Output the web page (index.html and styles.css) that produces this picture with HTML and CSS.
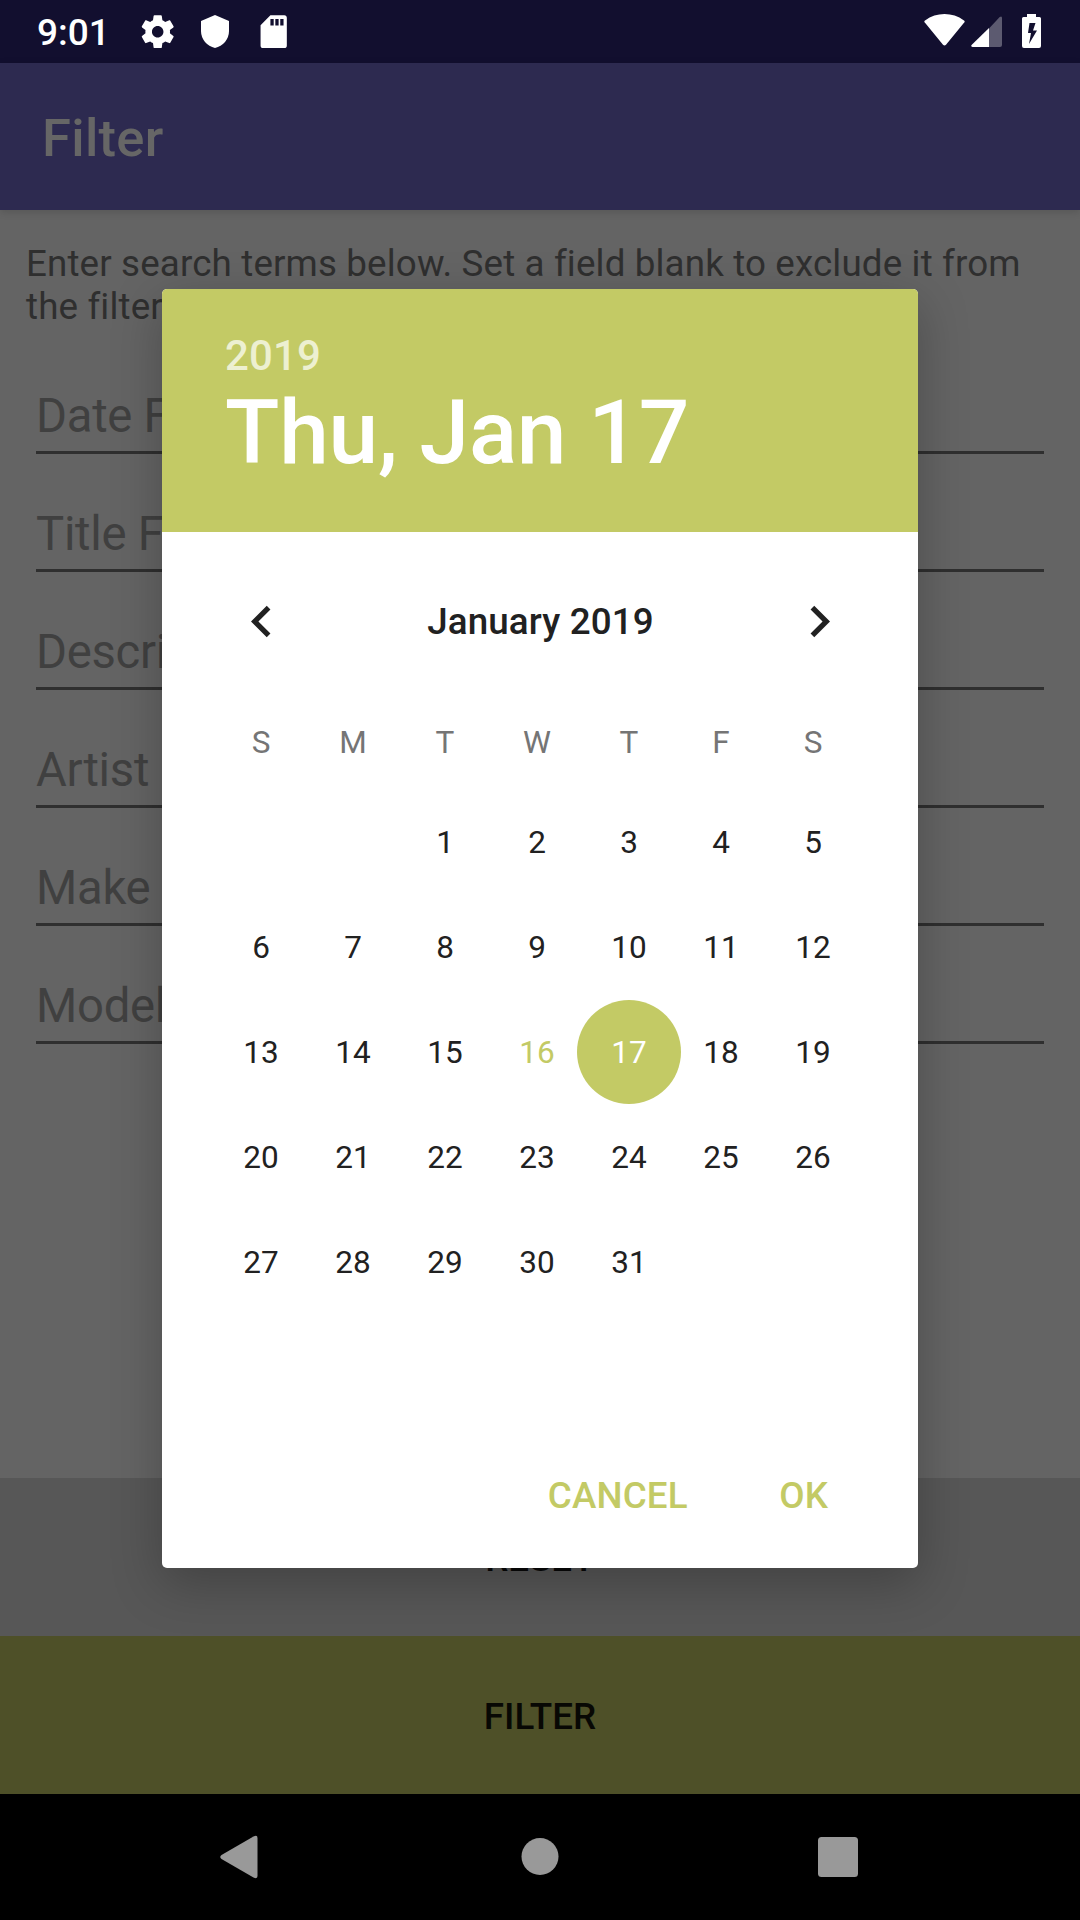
FILE: index.html
```html
<!DOCTYPE html>
<html lang="en">
<head>
<meta charset="utf-8">
<title>Filter</title>
<link rel="stylesheet" href="styles.css">
</head>
<body>
<div class="screen">
  <header class="status-bar">
    <span class="clock">9:01</span>
    <svg class="status-icon gear" viewBox="0 0 24 24"><path d="M19.43 12.98c.04-.32.07-.64.07-.98s-.03-.66-.07-.98l2.11-1.65c.19-.15.24-.42.12-.64l-2-3.46c-.12-.22-.39-.3-.61-.22l-2.49 1c-.52-.4-1.08-.73-1.69-.98l-.38-2.65C14.46 2.18 14.25 2 14 2h-4c-.25 0-.46.18-.49.42l-.38 2.65c-.61.25-1.17.59-1.69.98l-2.49-1c-.23-.09-.49 0-.61.22l-2 3.46c-.13.22-.07.49.12.64l2.11 1.65c-.04.32-.07.65-.07.98s.03.66.07.98l-2.11 1.65c-.19.15-.24.42-.12.64l2 3.46c.12.22.39.3.61.22l2.49-1c.52.4 1.08.73 1.69.98l.38 2.65c.03.24.24.42.49.42h4c.25 0 .46-.18.49-.42l.38-2.65c.61-.25 1.17-.59 1.69-.98l2.49 1c.23.09.49 0 .61-.22l2-3.46c.12-.22.07-.49-.12-.64l-2.11-1.65zM12 15.5c-1.93 0-3.5-1.57-3.5-3.5s1.57-3.5 3.5-3.5 3.500 1.570 3.500 3.500-1.570 3.500-3.500 3.500z"/></svg>
    <svg class="shield" viewBox="0 0 28 33"><path d="M14 0 28 6V16C28 24.500 22 31 14 33 6 31 0 24.500 0 16V6Z"/></svg>
    <svg class="status-icon sd" viewBox="0 0 24 24"><path d="M18 2h-8L4 8v12.500c0 .9.600 1.500 1.500 1.500h13c.9 0 1.500-.6 1.500-1.500v-17C20 2.600 19.400 2 18.500 2zm-6 6.300h-2V4.300h2zm3 0h-2V4.300h2zm3 0h-2V4.300h2z"/></svg>
    <svg class="wifi" viewBox="0 0 41 32"><path d="M1 8.800Q-.4 7.600 1 6.500C7 2 13.500 0 20.500 0S34 2 40 6.500Q41.400 7.600 40 8.800L22 30.800Q20.500 32.200 19 30.800Z"/></svg>
    <svg class="signal" viewBox="0 0 31 31"><path class="dim" d="M18 12.500 28.700 1Q31 -.6 31 2V29Q31 31 29 31H18Z"/><path d="M18 12V31H1.500Q-.8 30.500 .8 28.800Z"/></svg>
    <svg class="battery" viewBox="0 0 19 34"><path fill-rule="evenodd" d="M5 0H14V3H17.500Q19 3 19 4.500V32Q19 34 17 34H2Q0 34 0 32V4.500Q0 3 1.500 3H5ZM7.500 9 6 19H9L7 30 15 16.500H11L13.500 9Z"/></svg>
  </header>
  <div class="app-bar"><h1 class="app-title">Filter</h1></div>
  <main class="form">
    <p class="intro">Enter search terms below. Set a field blank to exclude it from the filter.</p>
    <div class="fields">
      <div class="field">Date Filter</div>
      <div class="field">Title Filter</div>
      <div class="field">Description Filter</div>
      <div class="field">Artist Filter</div>
      <div class="field">Make Filter</div>
      <div class="field">Model Filter</div>
    </div>
  </main>
  <div class="action reset">RESET</div>
  <div class="action apply">FILTER</div>
  <nav class="nav-bar">
    <svg viewBox="0 0 48 48"><path d="M36.500 3.500Q40.500 1.500 40.500 5V43Q40.500 46.300 36.500 44.500L4.500 26Q2 24 4.500 22Z"/></svg>
    <svg viewBox="0 0 48 48"><circle cx="24" cy="23.500" r="18.500"/></svg>
    <svg viewBox="0 0 48 48"><rect x="4" y="4" width="40" height="40" rx="3.500"/></svg>
  </nav>

  <section class="dialog">
    <div class="dialog-head">
      <div class="year">2019</div>
      <div class="date">Thu, Jan 17</div>
    </div>
    <div class="month-row">
      <svg class="chevron" viewBox="0 0 24 24"><path d="M15.410 7.410 14 6l-6 6 6 6 1.410-1.410L10.830 12z"/></svg>
      <span class="month">January 2019</span>
      <svg class="chevron" viewBox="0 0 24 24"><path d="M10 6 8.590 7.410 13.170 12l-4.580 4.590L10 18l6-6z"/></svg>
    </div>
    <div class="week">
      <span>S</span><span>M</span><span>T</span><span>W</span><span>T</span><span>F</span><span>S</span>
    </div>
    <div class="days">
      <span class="first">1</span><span>2</span><span>3</span><span>4</span><span>5</span>
      <span>6</span><span>7</span><span>8</span><span>9</span><span>10</span><span>11</span><span>12</span>
      <span>13</span><span>14</span><span>15</span><span class="today">16</span><span class="selected">17</span><span>18</span><span>19</span>
      <span>20</span><span>21</span><span>22</span><span>23</span><span>24</span><span>25</span><span>26</span>
      <span>27</span><span>28</span><span>29</span><span>30</span><span>31</span>
    </div>
    <div class="buttons"><span>CANCEL</span><span>OK</span></div>
  </section>
</div>
</body>
</html>
```
FILE: styles.css
```css
* { box-sizing: border-box; }
body { margin: 0; font-family: Roboto, sans-serif; background: #000; }
svg { display: block; flex: none; }

.screen {
  position: relative;
  display: flex;
  flex-direction: column;
  width: 1080px;
  height: 1920px;
  overflow: hidden;
  background: #646464;
}

/* Status bar */
.status-bar {
  display: flex;
  align-items: flex-start;
  height: 63px;
  padding: 0 39px 0 37px;
  background: #120f2f;
  fill: #fff;
}
.clock { width: 100.500px; margin-top: 11px; font-size: 37px; line-height: 44px; font-weight: 500; color: #fff; }
.status-icon { width: 39.400px; height: 39.400px; margin-top: 12px; }
.shield { width: 28px; height: 33px; margin: 15px 0 0 24.500px; }
.sd { margin-left: 24.500px; }
.wifi { width: 41px; height: 32px; margin: 14px 0 0 auto; }
.signal { width: 31px; height: 31px; margin: 16px 0 0 6px; }
.dim { fill: #5c5a70; }
.battery { width: 19px; height: 34px; margin: 14px 0 0 20px; }

.app-bar {
  display: flex;
  align-items: center;
  height: 147px;
  padding: 2px 0 0 42px;
  background: #2d2a50;
  box-shadow: 0 2px 8px rgba(0, 0, 0, .14);
}
.app-title { margin: 0; font-size: 52.500px; line-height: 62px; font-weight: 500; letter-spacing: .3px; color: #666; }

.form { flex: 1; padding-top: 32px; }
.intro { margin: 0; padding: 0 36px 0 26px; font-size: 36.750px; line-height: 43px; letter-spacing: .14px; color: #2f2f2f; }
.fields { padding: 8px 36px 0; }
.field {
  height: 118px;
  padding-top: 53px;
  border-bottom: 3px solid #2f2f2f;
  font-size: 47.250px;
  line-height: 55px;
  letter-spacing: -.28px;
  color: #404040;
}

.action {
  display: flex;
  align-items: center;
  justify-content: center;
  height: 158px;
  padding-top: 2px;
  font-size: 36.750px;
  line-height: 43px;
  font-weight: 500;
}
.reset { background: #575757; color: #080808; }
.apply { background: #4e5028; color: #080804; }

.nav-bar {
  display: flex;
  justify-content: space-between;
  height: 126px;
  padding: 39px 218px 0 217px;
  background: #000;
  fill: #999;
}
.nav-bar svg { width: 48px; height: 48px; }

/* Date picker */
.dialog {
  position: absolute;
  left: 162px;
  top: 289px;
  width: 756px;
  height: 1279px;
  display: flex;
  flex-direction: column;
  overflow: hidden;
  border-radius: 5px;
  background: #fff;
  color: #212121;
  box-shadow: 0 15px 50px rgba(0, 0, 0, .25);
}
.dialog-head { height: 243px; padding: 42px 63px 0; background: #c3ca65; color: #fff; font-weight: 500; }
.year { font-size: 42px; line-height: 49px; letter-spacing: .15px; color: #edf0d1; }
.date { font-size: 89.250px; line-height: 105px; letter-spacing: -.24px; }
.month-row {
  display: flex;
  align-items: center;
  justify-content: space-between;
  height: 63px;
  margin-top: 58px;
  padding: 0 67px 0 68px;
}
.chevron { width: 63px; height: 63px; fill: #212121; }
.month { font-size: 36.750px; line-height: 43px; font-weight: 500; letter-spacing: .14px; }
.week, .days {
  display: grid;
  grid-template-columns: repeat(7, 92px);
  padding-left: 53px;
  font-size: 31.500px;
  text-align: center;
}
.week { margin-top: 71px; line-height: 37px; color: #757575; }
.days { margin-top: 29px; grid-auto-rows: 105px; line-height: 105px; }
.first { grid-column: 3; }
.today { color: #c3ca65; }
.selected { width: 104px; height: 104px; margin-left: -6px; border-radius: 50%; background: #c3ca65; color: #fff; }
.buttons {
  display: flex;
  justify-content: flex-end;
  gap: 91.500px;
  margin-top: 159px;
  padding-right: 90px;
  font-size: 36.750px;
  line-height: 43px;
  font-weight: 500;
  letter-spacing: .14px;
  color: #c3ca65;
}
```
